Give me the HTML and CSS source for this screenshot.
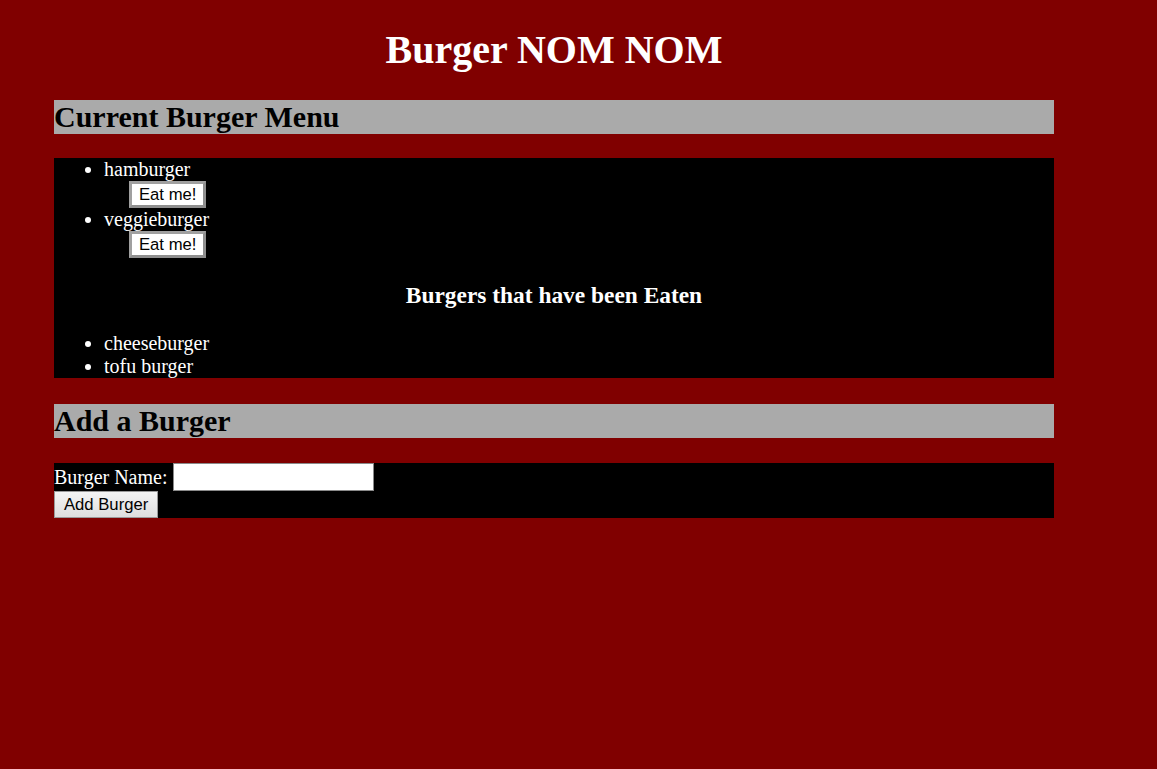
FILE: index.html
```html
<!DOCTYPE html>
<html lang="en">
<head>
<meta charset="utf-8">
<title>Burger NOM NOM</title>
<link rel="stylesheet" href="styles.css">
</head>
<body>
<div class="container">
  <h1 class="title">Burger NOM NOM</h1>
  <h2 class="bar">Current Burger Menu</h2>
  <div class="panel">
    <ul class="list">
      <li>hamburger
        <div class="eat-row"><button class="eat-btn" type="button">Eat me!</button></div>
      </li>
      <li>veggieburger
        <div class="eat-row"><button class="eat-btn" type="button">Eat me!</button></div>
      </li>
    </ul>
    <h3 class="sub">Burgers that have been Eaten</h3>
    <ul class="list">
      <li>cheeseburger</li>
      <li>tofu burger</li>
    </ul>
  </div>
  <h2 class="bar">Add a Burger</h2>
  <form class="panel form">
    <div class="form-row"><label for="bn">Burger Name:</label> <input id="bn" class="name-input" type="text"></div>
    <button class="add-btn" type="button">Add Burger</button>
  </form>
</div>
</body>
</html>
```
FILE: styles.css
```css
html, body {
  background: #800000;
}
body {
  margin: 0;
  padding: 0 8px;
  font-family: "Liberation Serif", "Times New Roman", serif;
  font-size: 20px;
  color: #fff;
}
.container {
  width: 1000px;
  margin-left: 46px;
}
.title {
  font-size: 40px;
  margin: 26.8px 0;
  text-align: center;
  line-height: 46px;
  color: #fff;
}
.bar {
  background: #aaaaaa;
  color: #000;
  font-size: 30px;
  line-height: 34px;
  margin: 26px 0 24px;
}
.panel {
  background: #000;
  color: #fff;
}
.list {
  margin: 20px 0;
  padding-left: 50px;
  line-height: 23px;
}
.eat-row {
  padding-left: 25px;
  line-height: 0;
  height: 27.5px;
}
.eat-btn {
  font-family: "Liberation Sans", Arial, sans-serif;
  font-size: 16.67px;
  line-height: 19px;
  height: 27px;
  padding: 1px 7px;
  background: #fff;
  color: #000;
  border: 3px solid #8f8f8f;
  border-top-color: #a0a0a0;
  border-left-color: #a0a0a0;
  margin: 0;
  vertical-align: top;
}
.sub {
  text-align: center;
  font-size: 23.4px;
  line-height: 27px;
  margin: 23.4px 0;
}
.form {
  margin: 25px 0 0;
  display: flex;
  flex-direction: column;
  align-items: flex-start;
}
.form-row {
  display: flex;
  align-items: center;
  height: 28px;
  line-height: 23px;
}
.form-row label {
  margin-right: 5px;
}
.name-input {
  box-sizing: border-box;
  width: 201px;
  height: 28px;
  margin: 0;
  border: 1px solid #8a8a8a;
  background: #fff;
  padding: 1px 3px;
  font-size: 16.67px;
}
.add-btn {
  font-family: "Liberation Sans", Arial, sans-serif;
  font-size: 16.67px;
  box-sizing: border-box;
  height: 27px;
  padding: 1px 9px;
  margin: 0;
  color: #000;
  background: linear-gradient(#f4f4f4, #dedede);
  border: 1px solid #9a9a9a;
}
```
